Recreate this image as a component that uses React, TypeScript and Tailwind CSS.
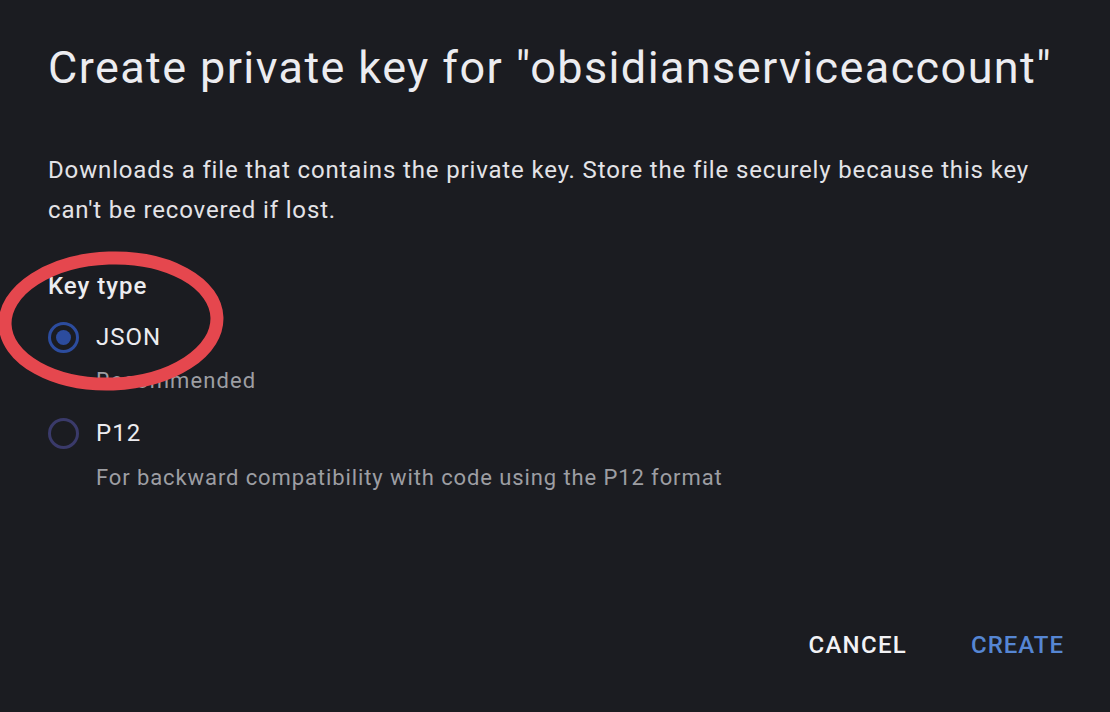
import React from 'react';

function Radio({ checked }: { checked?: boolean }) {
  return (
    <span
      className={`w-[31px] h-[31px] rounded-full border-[3px] flex items-center justify-center shrink-0 ${
        checked ? 'border-[#2c4c9e]' : 'border-[#3a3a6a]'
      }`}
    >
      {checked && <span className="w-[15px] h-[15px] rounded-full bg-[#2c4c9e]" />}
    </span>
  );
}

export default function App() {
  return (
    <div
      className="relative w-[1110px] h-[712px] bg-[#1b1c21] overflow-hidden flex flex-col px-[48px] pt-[40px] pb-[49px] text-[#e6e6ea]"
      style={{ fontFamily: 'Roboto, "Liberation Sans", sans-serif' }}
    >
      <h1 className="text-[45px] leading-[56px] font-normal tracking-[1.4px] text-[#ececf0] whitespace-nowrap">
        Create private key for "obsidianserviceaccount"
      </h1>

      <p className="mt-[54px] text-[24px] leading-[40px] tracking-[0.85px] text-[#e3e3e7] pr-[30px]">
        Downloads a file that contains the private key. Store the file securely because this key can't be recovered if lost.
      </p>

      <div className="mt-[40px] text-[24px] leading-[32px] font-medium tracking-[1px] text-[#ececf0]">Key type</div>

      <label className="mt-[15px] flex items-center gap-[17px] h-[40px]">
        <Radio checked />
        <span className="text-[24px] tracking-[1px] text-[#ececf0]">JSON</span>
      </label>
      <div className="mt-[10px] pl-[48px] text-[22px] leading-[28px] tracking-[1.1px] text-[#9d9ea3]">Recommended</div>

      <label className="mt-[18px] flex items-center gap-[17px] h-[40px]">
        <Radio />
        <span className="text-[24px] tracking-[1px] text-[#ececf0]">P12</span>
      </label>
      <div className="mt-[11px] pl-[48px] text-[22px] leading-[28px] tracking-[0.9px] text-[#9d9ea3]">
        For backward compatibility with code using the P12 format
      </div>

      <div className="mt-auto flex justify-end items-center gap-[64px]">
        <button className="text-[24px] leading-[36px] font-medium tracking-[1.3px] text-[#f2f2f5]">CANCEL</button>
        <button className="text-[24px] leading-[36px] font-medium tracking-[1px] text-[#5686d3] mr-[-2px]">CREATE</button>
      </div>

      <svg className="absolute inset-0 pointer-events-none" width="1110" height="712">
        <ellipse cx="111" cy="321" rx="106" ry="63" fill="none" stroke="#e5474e" strokeWidth="13" transform="rotate(-2 111 321)" />
      </svg>
    </div>
  );
}
